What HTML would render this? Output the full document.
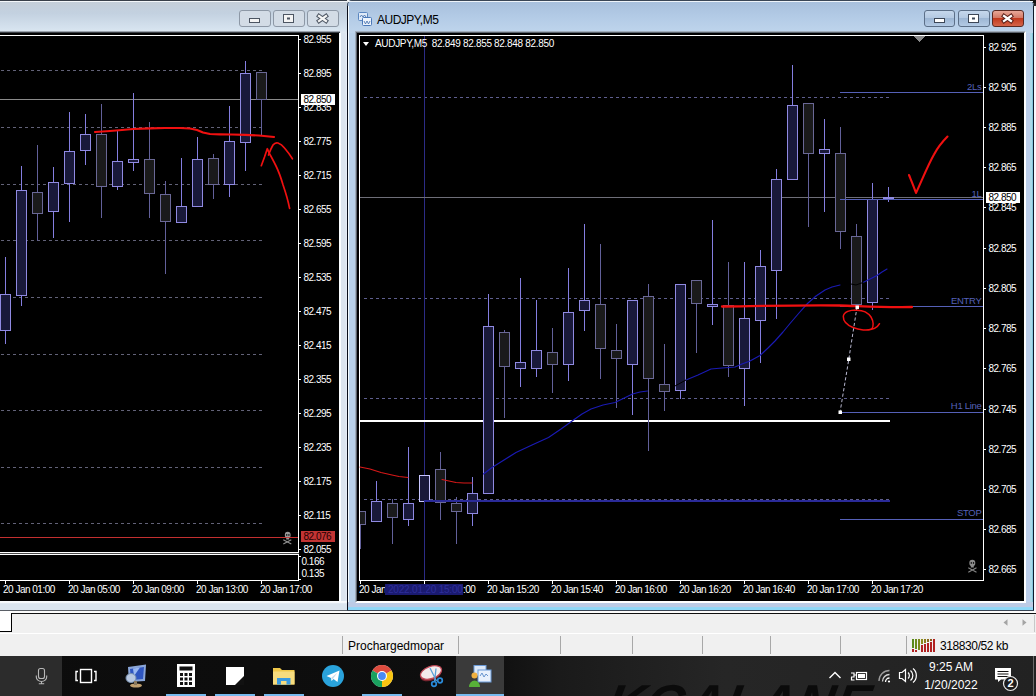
<!DOCTYPE html>
<html><head><meta charset="utf-8"><title>AUDJPY,M5</title>
<style>
html,body{margin:0;padding:0;background:#f0f0f0;}
body{width:1036px;height:696px;position:relative;overflow:hidden;font-family:"Liberation Sans",sans-serif;}
.abs{position:absolute;}
.pl{position:absolute;color:#fff;font-size:10px;line-height:13px;white-space:nowrap;letter-spacing:-0.5px;}
.bl{position:absolute;color:#5560b8;font-size:9.5px;line-height:13px;white-space:nowrap;text-align:right;letter-spacing:-0.3px;}
.btn{position:absolute;top:10px;height:17px;border-radius:3px;box-sizing:border-box;}
</style></head><body>
<!-- LEFT WINDOW -->
<div class="abs" style="left:0;top:0;width:347px;height:610px;background:#dce6f0;"></div>
<div class="abs" style="left:0;top:0;width:347px;height:33px;background:linear-gradient(#c5ced8 0,#c3d1e0 40%,#d6e3ef 88%,#e0e8f0 100%);"></div>
<div class="abs" style="left:0;top:31px;width:340px;height:1px;background:#9aa2ac;"></div><div class="abs" style="left:0;top:32px;width:340px;height:1px;background:#3a3e44;"></div>
<div class="abs" style="left:0;top:0;width:347px;height:1px;background:#39404a;"></div>
<div class="abs" style="left:0;top:1px;width:347px;height:1px;background:#f4f7fa;"></div>
<div class="btn" style="left:239px;width:32px;border:1px solid #8d98a6;background:#d3dce6;"></div>
<div class="btn" style="left:273px;width:32px;border:1px solid #8d98a6;background:#d3dce6;"></div>
<div class="btn" style="left:307px;width:32px;border:1px solid #8d98a6;background:#d3dce6;"></div>
<div class="abs" style="left:339px;top:33px;width:8px;height:577px;background:linear-gradient(90deg,#fafdff 0,#fafdff 25%,#dbe4ee 26%,#dbe4ee 75%,#e8eef8 100%);"></div>
<div class="abs" style="left:0;top:33px;width:339px;height:568px;background:#000;"></div>
<div class="abs" style="left:0;top:601px;width:347px;height:9px;background:linear-gradient(#fafcfe 0,#f4f8fb 20%,#dbe5ef 30%,#dbe5ef 100%);"></div><div class="abs" style="left:0;top:610px;width:347px;height:1px;background:#5a5f66;"></div>
<!-- RIGHT WINDOW -->
<div class="abs" style="left:347px;top:0;width:687px;height:611px;background:#b9d1ea;border-radius:5px 5px 0 0;"></div>
<div class="abs" style="left:347px;top:0;width:687px;height:33px;background:linear-gradient(#a7bfdc 0,#b3cbe6 50%,#bfd5ec 100%);border-radius:5px 5px 0 0;border:1px solid #3a4656;border-bottom:none;box-sizing:border-box;"></div>
<div class="abs" style="left:348px;top:1px;width:685px;height:1px;background:#eef4fa;"></div>
<div class="abs" style="left:347px;top:6px;width:1px;height:605px;background:#0a0e1a;"></div>
<div class="abs" style="left:1033px;top:6px;width:1px;height:605px;background:#0c1a2a;"></div><div class="abs" style="left:1034px;top:8px;width:2px;height:603px;background:#f6f6fc;"></div>
<div class="abs" style="left:348px;top:6px;width:1px;height:604px;background:#f4fbff;"></div>
<div class="abs" style="left:1026px;top:33px;width:7px;height:577px;background:linear-gradient(90deg,#bccfec 0,#bccfec 57%,#a8d8e8 58%,#a8d8e8 85%,#84c4dc 86%,#84c4dc 100%);"></div>
<div class="abs" style="left:347px;top:610px;width:687px;height:1px;background:#3a4656;"></div>
<div class="abs" style="left:348px;top:602px;width:685px;height:8px;background:linear-gradient(#bccbe6 0,#bccbe6 60%,#8ed8f8 70%,#8ed8f8 100%);"></div>
<div class="abs" style="left:355px;top:31px;width:671px;height:572px;box-sizing:border-box;border:1px solid #fff;border-left-color:#a0acba;border-top-color:#a0acba;"></div>
<div class="abs" style="left:356px;top:32px;width:669px;height:570px;box-sizing:border-box;border:1px solid #fff;border-left-color:#5a626c;border-top-color:#5a626c;"></div>
<div class="abs" style="left:357px;top:33px;width:667px;height:568px;background:#000;"></div>
<div class="abs" style="left:377px;top:13px;font-size:12px;line-height:15px;color:#000;letter-spacing:-0.5px;">AUDJPY,M5</div>
<div class="btn" style="left:924px;width:31px;border:1px solid #5c6f88;background:linear-gradient(#c5d7ec 0,#b4c9e2 45%,#9db6d4 50%,#b3cae4 100%);"></div>
<div class="btn" style="left:958px;width:32px;border:1px solid #5c6f88;background:linear-gradient(#c5d7ec 0,#b4c9e2 45%,#9db6d4 50%,#b3cae4 100%);"></div>
<div class="btn" style="left:992px;width:32px;border:1px solid #5a2a22;background:linear-gradient(#e8a898 0,#d47a66 45%,#c23a1e 50%,#d4654a 100%);"></div>
<div class="abs" style="left:1030px;top:0;width:6px;height:1px;background:#111;"></div><div class="abs" style="left:1033px;top:1px;width:3px;height:2px;background:#111;"></div><div class="abs" style="left:1034px;top:3px;width:2px;height:3px;background:#222;"></div>
<!-- MDI area below / status -->
<div class="abs" style="left:0;top:611px;width:1036px;height:2px;background:#fbfbfb;"></div><div class="abs" style="left:11px;top:613px;width:1025px;height:1px;background:#101010;"></div>
<div class="abs" style="left:0;top:614px;width:1036px;height:42px;background:#f0f0f0;"></div>
<div class="abs" style="left:0;top:611px;width:12px;height:21px;background:#fff;border-bottom:1px solid #000;box-sizing:border-box;"></div><div class="abs" style="left:11px;top:613px;width:1px;height:19px;background:#000;"></div>
<div class="abs" style="left:0;top:633px;width:1036px;height:1px;background:#fff;"></div>
<div class="abs" style="left:348px;top:639px;font-size:12px;line-height:14px;color:#000;letter-spacing:0px;">Prochargedmopar</div>
<div class="abs" style="left:940px;top:639px;font-size:12px;line-height:14px;color:#000;letter-spacing:-0.4px;">318830/52 kb</div>
<!-- TASKBAR -->
<div class="abs" style="left:0;top:656px;width:1036px;height:40px;background:linear-gradient(90deg,#0c0c0c 0,#0e0e0e 47%,#1a1a1a 54%,#262626 70%,#222 100%);"></div>
<div class="abs" style="left:612px;top:677px;height:19px;width:424px;overflow:hidden;"><div style="font-size:52px;line-height:52px;font-style:italic;font-weight:bold;color:#0b0b0b;letter-spacing:1px;white-space:nowrap;transform:skewX(-10deg);transform-origin:0 0;">KGALANE</div></div>
<div class="abs" style="left:0;top:656px;width:62px;height:40px;background:#2c2c2c;"></div>
<div class="abs" style="left:456px;top:656px;width:48px;height:40px;background:#3a3a3a;"></div>
<div class="abs" style="left:926px;top:660px;width:50px;font-size:12px;line-height:14px;color:#fff;text-align:center;">9:25 AM</div>
<div class="abs" style="left:916px;top:678px;width:70px;font-size:12px;line-height:14px;color:#fff;text-align:center;">1/20/2022</div>
<!--CHART-->
<svg width="1036" height="696" viewBox="0 0 1036 696" style="position:absolute;left:0;top:0" shape-rendering="crispEdges">
<line x1="1" y1="70.5" x2="262" y2="70.5" stroke="#626278" stroke-width="1" stroke-dasharray="3 3"/>
<line x1="1" y1="127.5" x2="262" y2="127.5" stroke="#626278" stroke-width="1" stroke-dasharray="3 3"/>
<line x1="1" y1="184.5" x2="262" y2="184.5" stroke="#626278" stroke-width="1" stroke-dasharray="3 3"/>
<line x1="1" y1="240.5" x2="262" y2="240.5" stroke="#626278" stroke-width="1" stroke-dasharray="3 3"/>
<line x1="1" y1="297.5" x2="262" y2="297.5" stroke="#626278" stroke-width="1" stroke-dasharray="3 3"/>
<line x1="1" y1="354.5" x2="262" y2="354.5" stroke="#626278" stroke-width="1" stroke-dasharray="3 3"/>
<line x1="1" y1="410.5" x2="262" y2="410.5" stroke="#626278" stroke-width="1" stroke-dasharray="3 3"/>
<line x1="1" y1="467.5" x2="262" y2="467.5" stroke="#626278" stroke-width="1" stroke-dasharray="3 3"/>
<line x1="1" y1="523.5" x2="262" y2="523.5" stroke="#626278" stroke-width="1" stroke-dasharray="3 3"/>
<rect x="0" y="99" width="298" height="1" fill="#8a8a8a"/>
<clipPath id="cl"><rect x="0" y="36" width="298" height="516"/></clipPath><g clip-path="url(#cl)">
<rect x="5" y="257" width="1" height="37" fill="#847ee0"/>
<rect x="5" y="331" width="1" height="13" fill="#847ee0"/>
<rect x="0.5" y="294.5" width="10" height="36" fill="#19193a" stroke="#908ae2" stroke-width="1"/>
<rect x="21" y="166" width="1" height="24" fill="#847ee0"/>
<rect x="21" y="296" width="1" height="10" fill="#847ee0"/>
<rect x="16.5" y="190.5" width="10" height="105" fill="#19193a" stroke="#908ae2" stroke-width="1"/>
<rect x="37" y="145" width="1" height="47" fill="#62609a"/>
<rect x="37" y="214" width="1" height="27" fill="#62609a"/>
<rect x="32.5" y="192.5" width="10" height="21" fill="#1a1a1b" stroke="#6a6896" stroke-width="1"/>
<rect x="53" y="167" width="1" height="15" fill="#847ee0"/>
<rect x="53" y="212" width="1" height="26" fill="#847ee0"/>
<rect x="48.5" y="182.5" width="10" height="29" fill="#19193a" stroke="#908ae2" stroke-width="1"/>
<rect x="69" y="112" width="1" height="39" fill="#847ee0"/>
<rect x="69" y="184" width="1" height="38" fill="#847ee0"/>
<rect x="64.5" y="151.5" width="10" height="32" fill="#19193a" stroke="#908ae2" stroke-width="1"/>
<rect x="85" y="114" width="1" height="20" fill="#847ee0"/>
<rect x="85" y="151" width="1" height="14" fill="#847ee0"/>
<rect x="80.5" y="134.5" width="10" height="16" fill="#19193a" stroke="#908ae2" stroke-width="1"/>
<rect x="101" y="104" width="1" height="30" fill="#62609a"/>
<rect x="101" y="187" width="1" height="31" fill="#62609a"/>
<rect x="96.5" y="134.5" width="10" height="52" fill="#1a1a1b" stroke="#6a6896" stroke-width="1"/>
<rect x="117" y="131" width="1" height="30" fill="#847ee0"/>
<rect x="117" y="187" width="1" height="3" fill="#847ee0"/>
<rect x="112.5" y="161.5" width="10" height="25" fill="#19193a" stroke="#908ae2" stroke-width="1"/>
<rect x="133" y="93" width="1" height="66" fill="#847ee0"/>
<rect x="133" y="163" width="1" height="8" fill="#847ee0"/>
<rect x="128.5" y="159.5" width="10" height="3" fill="#19193a" stroke="#908ae2" stroke-width="1"/>
<rect x="149" y="122" width="1" height="37" fill="#62609a"/>
<rect x="149" y="194" width="1" height="24" fill="#62609a"/>
<rect x="144.5" y="159.5" width="10" height="34" fill="#1a1a1b" stroke="#6a6896" stroke-width="1"/>
<rect x="165" y="181" width="1" height="13" fill="#62609a"/>
<rect x="165" y="222" width="1" height="52" fill="#62609a"/>
<rect x="160.5" y="194.5" width="10" height="27" fill="#1a1a1b" stroke="#6a6896" stroke-width="1"/>
<rect x="181" y="158" width="1" height="48" fill="#847ee0"/>
<rect x="176.5" y="206.5" width="10" height="16" fill="#19193a" stroke="#908ae2" stroke-width="1"/>
<rect x="197" y="137" width="1" height="22" fill="#847ee0"/>
<rect x="192.5" y="159.5" width="10" height="47" fill="#19193a" stroke="#908ae2" stroke-width="1"/>
<rect x="213" y="154" width="1" height="4" fill="#62609a"/>
<rect x="213" y="185" width="1" height="14" fill="#62609a"/>
<rect x="208.5" y="158.5" width="10" height="26" fill="#1a1a1b" stroke="#6a6896" stroke-width="1"/>
<rect x="229" y="106" width="1" height="35" fill="#847ee0"/>
<rect x="229" y="185" width="1" height="12" fill="#847ee0"/>
<rect x="224.5" y="141.5" width="10" height="43" fill="#19193a" stroke="#908ae2" stroke-width="1"/>
<rect x="245" y="61" width="1" height="12" fill="#847ee0"/>
<rect x="245" y="143" width="1" height="28" fill="#847ee0"/>
<rect x="240.5" y="73.5" width="10" height="69" fill="#19193a" stroke="#908ae2" stroke-width="1"/>
<rect x="261" y="100" width="1" height="35" fill="#62609a"/>
<rect x="256.5" y="72.5" width="10" height="27" fill="#1a1a1b" stroke="#6a6896" stroke-width="1"/>
</g>
<rect x="0" y="537" width="298" height="1" fill="#c43030"/>
<rect x="0" y="35" width="299" height="1" fill="#fff"/>
<rect x="298" y="35" width="1" height="546" fill="#fff"/>
<rect x="0" y="552" width="299" height="1" fill="#fff"/>
<rect x="0" y="553" width="299" height="1" fill="#4a4a4a"/>
<rect x="0" y="554" width="299" height="1" fill="#fff"/>
<rect x="0" y="580" width="299" height="1" fill="#fff"/>
<rect x="299" y="39" width="2" height="1" fill="#fff"/>
<rect x="299" y="73" width="2" height="1" fill="#fff"/>
<rect x="299" y="107" width="2" height="1" fill="#fff"/>
<rect x="299" y="141" width="2" height="1" fill="#fff"/>
<rect x="299" y="175" width="2" height="1" fill="#fff"/>
<rect x="299" y="209" width="2" height="1" fill="#fff"/>
<rect x="299" y="243" width="2" height="1" fill="#fff"/>
<rect x="299" y="277" width="2" height="1" fill="#fff"/>
<rect x="299" y="311" width="2" height="1" fill="#fff"/>
<rect x="299" y="345" width="2" height="1" fill="#fff"/>
<rect x="299" y="379" width="2" height="1" fill="#fff"/>
<rect x="299" y="413" width="2" height="1" fill="#fff"/>
<rect x="299" y="447" width="2" height="1" fill="#fff"/>
<rect x="299" y="481" width="2" height="1" fill="#fff"/>
<rect x="299" y="515" width="2" height="1" fill="#fff"/>
<rect x="299" y="549" width="2" height="1" fill="#fff"/>
<rect x="299" y="556" width="2" height="1" fill="#fff"/><rect x="299" y="579" width="2" height="1" fill="#fff"/>
<rect x="5" y="581" width="1" height="3" fill="#fff"/>
<rect x="69" y="581" width="1" height="3" fill="#fff"/>
<rect x="133" y="581" width="1" height="3" fill="#fff"/>
<rect x="197" y="581" width="1" height="3" fill="#fff"/>
<rect x="261" y="581" width="1" height="3" fill="#fff"/>
<line x1="364" y1="97.5" x2="890" y2="97.5" stroke="#5e5e8e" stroke-width="1" stroke-dasharray="3 3"/>
<line x1="364" y1="298.5" x2="890" y2="298.5" stroke="#5e5e8e" stroke-width="1" stroke-dasharray="3 3"/>
<line x1="364" y1="398.5" x2="890" y2="398.5" stroke="#5e5e8e" stroke-width="1" stroke-dasharray="3 3"/>
<line x1="364" y1="499.5" x2="890" y2="499.5" stroke="#5e5e8e" stroke-width="1" stroke-dasharray="3 3"/>
<rect x="424" y="36" width="1" height="545" fill="#2c2c86"/>
<rect x="360" y="197" width="623" height="1" fill="#6e6e78"/>
<rect x="360" y="420" width="530" height="2" fill="#fff"/>
<clipPath id="cr"><rect x="360" y="36" width="623" height="544"/></clipPath><g clip-path="url(#cr)">
<rect x="360" y="525" width="1" height="24" fill="#62609a"/>
<rect x="355.5" y="511.5" width="10" height="13" fill="#1a1a1b" stroke="#6a6896" stroke-width="1"/>
<rect x="376" y="481" width="1" height="20" fill="#847ee0"/>
<rect x="371.5" y="501.5" width="10" height="20" fill="#19193a" stroke="#908ae2" stroke-width="1"/>
<rect x="392" y="499" width="1" height="4" fill="#62609a"/>
<rect x="392" y="518" width="1" height="26" fill="#62609a"/>
<rect x="387.5" y="503.5" width="10" height="14" fill="#1a1a1b" stroke="#6a6896" stroke-width="1"/>
<rect x="408" y="447" width="1" height="56" fill="#847ee0"/>
<rect x="408" y="520" width="1" height="6" fill="#847ee0"/>
<rect x="403.5" y="503.5" width="10" height="16" fill="#19193a" stroke="#908ae2" stroke-width="1"/>
<rect x="419.5" y="475.5" width="10" height="26" fill="#19193a" stroke="#c8c6ff" stroke-width="1"/>
<rect x="440" y="452" width="1" height="17" fill="#62609a"/>
<rect x="440" y="503" width="1" height="17" fill="#62609a"/>
<rect x="435.5" y="469.5" width="10" height="33" fill="#1a1a1b" stroke="#6a6896" stroke-width="1"/>
<rect x="456" y="497" width="1" height="6" fill="#62609a"/>
<rect x="456" y="512" width="1" height="32" fill="#62609a"/>
<rect x="451.5" y="503.5" width="10" height="8" fill="#1a1a1b" stroke="#6a6896" stroke-width="1"/>
<rect x="472" y="477" width="1" height="16" fill="#847ee0"/>
<rect x="472" y="514" width="1" height="12" fill="#847ee0"/>
<rect x="467.5" y="493.5" width="10" height="20" fill="#19193a" stroke="#908ae2" stroke-width="1"/>
<rect x="488" y="294" width="1" height="32" fill="#847ee0"/>
<rect x="483.5" y="326.5" width="10" height="167" fill="#19193a" stroke="#908ae2" stroke-width="1"/>
<rect x="504" y="330" width="1" height="2" fill="#62609a"/>
<rect x="504" y="367" width="1" height="51" fill="#62609a"/>
<rect x="499.5" y="332.5" width="10" height="34" fill="#1a1a1b" stroke="#6a6896" stroke-width="1"/>
<rect x="520" y="278" width="1" height="84" fill="#847ee0"/>
<rect x="520" y="369" width="1" height="18" fill="#847ee0"/>
<rect x="515.5" y="362.5" width="10" height="6" fill="#19193a" stroke="#908ae2" stroke-width="1"/>
<rect x="536" y="300" width="1" height="50" fill="#847ee0"/>
<rect x="536" y="369" width="1" height="8" fill="#847ee0"/>
<rect x="531.5" y="350.5" width="10" height="18" fill="#19193a" stroke="#908ae2" stroke-width="1"/>
<rect x="552" y="328" width="1" height="24" fill="#62609a"/>
<rect x="552" y="365" width="1" height="28" fill="#62609a"/>
<rect x="547.5" y="352.5" width="10" height="12" fill="#1a1a1b" stroke="#6a6896" stroke-width="1"/>
<rect x="568" y="268" width="1" height="44" fill="#847ee0"/>
<rect x="568" y="365" width="1" height="16" fill="#847ee0"/>
<rect x="563.5" y="312.5" width="10" height="52" fill="#19193a" stroke="#908ae2" stroke-width="1"/>
<rect x="584" y="224" width="1" height="76" fill="#847ee0"/>
<rect x="584" y="311" width="1" height="20" fill="#847ee0"/>
<rect x="579.5" y="300.5" width="10" height="10" fill="#19193a" stroke="#908ae2" stroke-width="1"/>
<rect x="600" y="244" width="1" height="60" fill="#62609a"/>
<rect x="600" y="349" width="1" height="30" fill="#62609a"/>
<rect x="595.5" y="304.5" width="10" height="44" fill="#1a1a1b" stroke="#6a6896" stroke-width="1"/>
<rect x="616" y="324" width="1" height="26" fill="#62609a"/>
<rect x="616" y="359" width="1" height="49" fill="#62609a"/>
<rect x="611.5" y="350.5" width="10" height="8" fill="#1a1a1b" stroke="#6a6896" stroke-width="1"/>
<rect x="632" y="365" width="1" height="50" fill="#847ee0"/>
<rect x="627.5" y="300.5" width="10" height="64" fill="#19193a" stroke="#908ae2" stroke-width="1"/>
<rect x="648" y="284" width="1" height="12" fill="#62609a"/>
<rect x="648" y="379" width="1" height="72" fill="#62609a"/>
<rect x="643.5" y="296.5" width="10" height="82" fill="#1a1a1b" stroke="#6a6896" stroke-width="1"/>
<rect x="664" y="344" width="1" height="40" fill="#62609a"/>
<rect x="664" y="392" width="1" height="19" fill="#62609a"/>
<rect x="659.5" y="384.5" width="10" height="7" fill="#1a1a1b" stroke="#6a6896" stroke-width="1"/>
<rect x="680" y="391" width="1" height="8" fill="#847ee0"/>
<rect x="675.5" y="284.5" width="10" height="106" fill="#19193a" stroke="#908ae2" stroke-width="1"/>
<rect x="696" y="304" width="1" height="49" fill="#62609a"/>
<rect x="691.5" y="280.5" width="10" height="23" fill="#1a1a1b" stroke="#6a6896" stroke-width="1"/>
<rect x="712" y="220" width="1" height="84" fill="#847ee0"/>
<rect x="712" y="307" width="1" height="18" fill="#847ee0"/>
<rect x="707.5" y="304.5" width="10" height="2" fill="#19193a" stroke="#908ae2" stroke-width="1"/>
<rect x="728" y="262" width="1" height="43" fill="#62609a"/>
<rect x="728" y="366" width="1" height="11" fill="#62609a"/>
<rect x="723.5" y="305.5" width="10" height="60" fill="#1a1a1b" stroke="#6a6896" stroke-width="1"/>
<rect x="744" y="262" width="1" height="56" fill="#847ee0"/>
<rect x="744" y="369" width="1" height="37" fill="#847ee0"/>
<rect x="739.5" y="318.5" width="10" height="50" fill="#19193a" stroke="#908ae2" stroke-width="1"/>
<rect x="760" y="250" width="1" height="16" fill="#847ee0"/>
<rect x="760" y="321" width="1" height="42" fill="#847ee0"/>
<rect x="755.5" y="266.5" width="10" height="54" fill="#19193a" stroke="#908ae2" stroke-width="1"/>
<rect x="776" y="169" width="1" height="10" fill="#847ee0"/>
<rect x="776" y="271" width="1" height="48" fill="#847ee0"/>
<rect x="771.5" y="179.5" width="10" height="91" fill="#19193a" stroke="#908ae2" stroke-width="1"/>
<rect x="792" y="65" width="1" height="40" fill="#847ee0"/>
<rect x="787.5" y="105.5" width="10" height="74" fill="#19193a" stroke="#908ae2" stroke-width="1"/>
<rect x="808" y="154" width="1" height="73" fill="#62609a"/>
<rect x="803.5" y="103.5" width="10" height="50" fill="#1a1a1b" stroke="#6a6896" stroke-width="1"/>
<rect x="824" y="119" width="1" height="30" fill="#847ee0"/>
<rect x="824" y="154" width="1" height="58" fill="#847ee0"/>
<rect x="819.5" y="149.5" width="10" height="4" fill="#19193a" stroke="#908ae2" stroke-width="1"/>
<rect x="840" y="127" width="1" height="26" fill="#62609a"/>
<rect x="840" y="232" width="1" height="17" fill="#62609a"/>
<rect x="835.5" y="153.5" width="10" height="78" fill="#1a1a1b" stroke="#6a6896" stroke-width="1"/>
<rect x="856" y="224" width="1" height="12" fill="#62609a"/>
<rect x="851.5" y="236.5" width="10" height="68" fill="#1a1a1b" stroke="#6a6896" stroke-width="1"/>
<rect x="872" y="183" width="1" height="16" fill="#847ee0"/>
<rect x="872" y="303" width="1" height="7" fill="#847ee0"/>
<rect x="867.5" y="199.5" width="10" height="103" fill="#19193a" stroke="#908ae2" stroke-width="1"/>
<rect x="888" y="187" width="1" height="10" fill="#847ee0"/>
<rect x="888" y="199" width="1" height="3" fill="#847ee0"/>
<rect x="883.5" y="197.5" width="10" height="1" fill="#19193a" stroke="#908ae2" stroke-width="1"/>
</g>
<rect x="424" y="500" width="466" height="2" fill="#2a2a98"/>
<rect x="840" y="92" width="143" height="1" fill="#5560b8"/>
<rect x="840" y="199" width="143" height="1" fill="#5560b8"/>
<rect x="840" y="306" width="143" height="1" fill="#5560b8"/>
<rect x="840" y="412" width="143" height="1" fill="#5560b8"/>
<rect x="840" y="519" width="143" height="1" fill="#5560b8"/>
<rect x="359" y="35" width="625" height="1" fill="#fff"/>
<rect x="359" y="35" width="1" height="546" fill="#fff"/>
<rect x="983" y="35" width="1" height="546" fill="#fff"/>
<rect x="359" y="580" width="625" height="1" fill="#fff"/>
<rect x="984" y="47" width="2" height="1" fill="#fff"/>
<rect x="984" y="87" width="2" height="1" fill="#fff"/>
<rect x="984" y="127" width="2" height="1" fill="#fff"/>
<rect x="984" y="167" width="2" height="1" fill="#fff"/>
<rect x="984" y="207" width="2" height="1" fill="#fff"/>
<rect x="984" y="248" width="2" height="1" fill="#fff"/>
<rect x="984" y="288" width="2" height="1" fill="#fff"/>
<rect x="984" y="328" width="2" height="1" fill="#fff"/>
<rect x="984" y="368" width="2" height="1" fill="#fff"/>
<rect x="984" y="409" width="2" height="1" fill="#fff"/>
<rect x="984" y="449" width="2" height="1" fill="#fff"/>
<rect x="984" y="489" width="2" height="1" fill="#fff"/>
<rect x="984" y="529" width="2" height="1" fill="#fff"/>
<rect x="984" y="569" width="2" height="1" fill="#fff"/>
<rect x="360" y="581" width="1" height="3" fill="#fff"/>
<rect x="424" y="581" width="1" height="3" fill="#fff"/>
<rect x="488" y="581" width="1" height="3" fill="#fff"/>
<rect x="552" y="581" width="1" height="3" fill="#fff"/>
<rect x="616" y="581" width="1" height="3" fill="#fff"/>
<rect x="680" y="581" width="1" height="3" fill="#fff"/>
<rect x="744" y="581" width="1" height="3" fill="#fff"/>
<rect x="808" y="581" width="1" height="3" fill="#fff"/>
<rect x="872" y="581" width="1" height="3" fill="#fff"/>
<polygon points="914,36 925,36 919.5,42" fill="#8a8a8a"/>
</svg>
<svg width="1036" height="696" viewBox="0 0 1036 696" style="position:absolute;left:0;top:0" fill="none" stroke-linecap="round" stroke-linejoin="round">
<path d="M95 132 L110 131 L122 130 L133 129 L150 128.300 L165 128 L180 128 L190 128.500 L197 130 L203 132.500 L210 134 L220 134.300 L232 134.500 L245 134.800 L259 135.500 L274 137" stroke="#f01010" stroke-width="2.2"/>
<path d="M261.300 165.700 L264.500 157 L267.300 148.700 L269.500 153.800 C272 158 274 162 276 166 C279 172 281 178 283 184.700 C285.500 192 288 200 289.600 208.400" stroke="#f01010" stroke-width="1.700"/>
<path d="M268.500 155 C270 151 271.500 147.500 273 145 C274.500 143 276.500 142.600 278 143 C280.500 143.800 283 146 284.500 148 C287.500 151.500 290 155 292.400 158.800" stroke="#f01010" stroke-width="1.700"/>
<path d="M360 467 L370 469 L381 472.5 L392 475 L399 476.5 L408 477.5 M442 479.5 L449 481 L456 482.5 L464 483 L472 483" stroke="#d81818" stroke-width="1.05"/>
<path d="M483.5 474 L492 467.5 L504 460 L516 452.5 L532 445 L548.5 437.5 L561 429 L573.5 420 L582 414 L591 409 L603 405 L615 402.5 L632.5 394 L640 392 L647.5 391 M686 380 L698 375 L711 369 L722 368 L735 367 L742 364 L750 361 L760 355.5 L768 348 L775 341 L783 332 L790 323.5 L799 313 L807.5 303.5 L816 296 L825 290 L832 287 L840 285 M863 282.5 L870 279 L877 275.5 L882 272 L887 269" stroke="#1a1ab4" stroke-width="1.15"/>
<path d="M675 386 L686 380 M846 283 L856 285 L863 282.5" stroke="#000" stroke-width="1"/>
<path d="M722 306.5 C760 306 800 305 840 305.5 C860 306 880 307.5 912 307" stroke="#f01010" stroke-width="2.3"/>
<path d="M858 310 C850 309.500 843.500 312 843.300 316.500 C843.200 321 847 325 853 327.500 C859 330 868 331 871.500 329 C874 327 873.500 321 871 317 C868 312.500 862 310 856 310.200 M866 330 C871 330 877 328.500 879.500 323.700" stroke="#f01010" stroke-width="1.500"/>
<path d="M909 175 C911 180 914 187 916 193 C922 180 928 165 934 154.500 C938 147 943 141 947.500 136.500" stroke="#f01010" stroke-width="2.1"/>
<path d="M857 307 L848.75 359.5 L840 412.5" stroke="#b8b8d0" stroke-width="1" stroke-dasharray="2.5 3"/>
<rect x="855.5" y="305.5" width="3.5" height="3.5" fill="#fff" stroke="none"/>
<rect x="847.0" y="357.5" width="3.5" height="3.5" fill="#fff" stroke="none"/>
<rect x="838.5" y="410.5" width="3.5" height="3.5" fill="#fff" stroke="none"/>
</svg>
<div class="pl" style="left:303.5px;top:33px">82.955</div>
<div class="pl" style="left:303.5px;top:67px">82.895</div>
<div class="pl" style="left:303.5px;top:101px">82.835</div>
<div class="pl" style="left:303.5px;top:135px">82.775</div>
<div class="pl" style="left:303.5px;top:169px">82.715</div>
<div class="pl" style="left:303.5px;top:203px">82.655</div>
<div class="pl" style="left:303.5px;top:237px">82.595</div>
<div class="pl" style="left:303.5px;top:271px">82.535</div>
<div class="pl" style="left:303.5px;top:305px">82.475</div>
<div class="pl" style="left:303.5px;top:339px">82.415</div>
<div class="pl" style="left:303.5px;top:373px">82.355</div>
<div class="pl" style="left:303.5px;top:407px">82.295</div>
<div class="pl" style="left:303.5px;top:441px">82.235</div>
<div class="pl" style="left:303.5px;top:475px">82.175</div>
<div class="pl" style="left:303.5px;top:509px">82.115</div>
<div class="pl" style="left:303.5px;top:543px">82.055</div>
<div class="pl" style="left:301.5px;top:555px">0.166</div>
<div class="pl" style="left:301.5px;top:567px">0.135</div>
<div class="pl" style="left:988.5px;top:41px">82.925</div>
<div class="pl" style="left:988.5px;top:81px">82.905</div>
<div class="pl" style="left:988.5px;top:121px">82.885</div>
<div class="pl" style="left:988.5px;top:161px">82.865</div>
<div class="pl" style="left:988.5px;top:201px">82.845</div>
<div class="pl" style="left:988.5px;top:242px">82.825</div>
<div class="pl" style="left:988.5px;top:282px">82.805</div>
<div class="pl" style="left:988.5px;top:322px">82.785</div>
<div class="pl" style="left:988.5px;top:362px">82.765</div>
<div class="pl" style="left:988.5px;top:403px">82.745</div>
<div class="pl" style="left:988.5px;top:443px">82.725</div>
<div class="pl" style="left:988.5px;top:483px">82.705</div>
<div class="pl" style="left:988.5px;top:523px">82.685</div>
<div class="pl" style="left:988.5px;top:563px">82.665</div>
<div class="pl" style="left:3px;top:583px">20 Jan 01:00</div>
<div class="pl" style="left:68px;top:583px">20 Jan 05:00</div>
<div class="pl" style="left:132px;top:583px">20 Jan 09:00</div>
<div class="pl" style="left:196px;top:583px">20 Jan 13:00</div>
<div class="pl" style="left:260px;top:583px">20 Jan 17:00</div>
<div class="pl" style="left:359px;top:583px">20 Jan</div>
<div class="pl" style="left:487px;top:583px">20 Jan 15:20</div>
<div class="pl" style="left:551px;top:583px">20 Jan 15:40</div>
<div class="pl" style="left:615px;top:583px">20 Jan 16:00</div>
<div class="pl" style="left:679px;top:583px">20 Jan 16:20</div>
<div class="pl" style="left:743px;top:583px">20 Jan 16:40</div>
<div class="pl" style="left:807px;top:583px">20 Jan 17:00</div>
<div class="pl" style="left:871px;top:583px">20 Jan 17:20</div>
<div class="pl" style="left:463px;top:583px">:00</div>

<!-- chart header text -->
<div class="abs" style="left:363px;top:42px;width:0;height:0;border-left:3.5px solid transparent;border-right:3.5px solid transparent;border-top:4px solid #fff;"></div>
<div class="pl" style="left:375px;top:37px;letter-spacing:-0.32px;">AUDJPY,M5&nbsp; 82.849 82.855 82.848 82.850</div>
<!-- blue line labels -->
<div class="bl" style="left:930px;width:51.5px;top:80px;">2Ls</div>
<div class="bl" style="left:930px;width:51.5px;top:187px;">1L</div>
<div class="bl" style="left:930px;width:51.5px;top:294px;">ENTRY</div>
<div class="bl" style="left:930px;width:51.5px;top:399px;">H1 Line</div>
<div class="bl" style="left:930px;width:51.5px;top:506px;">STOP</div>
<!-- price boxes -->
<div class="abs" style="left:986px;top:192px;width:34px;height:11px;background:#fff;"></div>
<div class="pl" style="left:988.5px;top:191px;color:#000;">82.850</div>
<div class="abs" style="left:301px;top:94px;width:34px;height:11px;background:#fff;"></div>
<div class="pl" style="left:303.5px;top:93px;color:#000;">82.850</div>
<div class="abs" style="left:301px;top:531px;width:34px;height:11px;background:#c23434;"></div>
<div class="pl" style="left:303.5px;top:530px;color:#200;">82.076</div>
<!-- date highlight -->
<div class="abs" style="left:385px;top:584px;width:78px;height:11px;background:#1a1a70;"></div>
<div class="pl" style="left:388px;top:583px;color:#2e2e9a;letter-spacing:-0.2px;">2022.01.20 15:00</div>


<!-- window button glyphs + icons + taskbar -->
<svg width="1036" height="696" viewBox="0 0 1036 696" style="position:absolute;left:0;top:0">
<!-- left window buttons -->
<rect x="249.500" y="18.500" width="10" height="4" fill="#f4f4f4" stroke="#4c5562"/>
<rect x="283.500" y="14.500" width="10" height="8" fill="#f4f4f4" stroke="#4c5562"/>
<rect x="287" y="17.500" width="3" height="2" fill="#4c5562"/>
<path d="M319 16 L326 21 M326 16 L319 21" stroke="#4c5562" stroke-width="4.200" stroke-linecap="square"/>
<path d="M319 16 L326 21 M326 16 L319 21" stroke="#f4f4f4" stroke-width="2.200" stroke-linecap="square"/>
<!-- right window buttons -->
<rect x="934.500" y="18.500" width="10" height="4" fill="#fff" stroke="#3c4656"/>
<rect x="968.500" y="14.500" width="10" height="8" fill="#fff" stroke="#3c4656"/>
<rect x="972" y="17.500" width="3" height="2" fill="#3c4656"/>
<path d="M1004 16 L1011 21 M1011 16 L1004 21" stroke="#5a2018" stroke-width="4.200" stroke-linecap="square"/>
<path d="M1004 16 L1011 21 M1011 16 L1004 21" stroke="#fff" stroke-width="2.200" stroke-linecap="square"/>
<!-- title icon -->
<rect x="358.500" y="12.500" width="9" height="8" rx="1" fill="#dfeaf8" stroke="#5a86c0"/>
<rect x="362.500" y="17.500" width="9" height="8" rx="1" fill="#eef4fc" stroke="#4a78b8"/>
<path d="M360 17 l1.500 -2 l1.500 2 l1.500 -2 l1.500 2" stroke="#3a68a8" stroke-width="0.800" fill="none"/>
<path d="M364 21 l1.500 3 l1.500 -3 l1.500 3 l1.500 -3" stroke="#3a68a8" stroke-width="0.800" fill="none"/>
<!-- scroll arrows -->
<polygon points="1003.500,622.500 1007.500,619.300 1007.500,625.700" fill="#a4a4a4"/>
<polygon points="1026.500,622.500 1022.500,619.300 1022.500,625.700" fill="#a4a4a4"/>
<rect x="1034" y="615" width="1" height="17" fill="#c8c8c8"/>
<!-- status separators -->
<g fill="#a8a8a8">
<rect x="342" y="636" width="1" height="18"/><rect x="458" y="636" width="1" height="18"/><rect x="560" y="636" width="1" height="18"/>
<rect x="632" y="636" width="1" height="18"/><rect x="702" y="636" width="1" height="18"/><rect x="770" y="636" width="1" height="18"/>
<rect x="840" y="636" width="1" height="18"/><rect x="906" y="636" width="1" height="18"/>
</g>
<!-- signal bars -->
<g>
<rect x="912" y="639" width="2" height="9" fill="#5a8a1a"/><rect x="915" y="639" width="2" height="10" fill="#6a8a1a"/><rect x="918" y="639" width="2" height="11" fill="#7a8a1a"/>
<rect x="921" y="639" width="2" height="5" fill="#8a8a1a"/><rect x="921" y="645" width="2" height="7" fill="#b02020"/>
<rect x="924" y="639" width="2" height="4" fill="#8a7a1a"/><rect x="924" y="644" width="2" height="8" fill="#b02020"/>
<rect x="927" y="639" width="2" height="3" fill="#8a6a1a"/><rect x="927" y="643" width="2" height="9" fill="#b02020"/>
<rect x="930" y="639" width="2" height="2" fill="#8a5a1a"/><rect x="930" y="642" width="2" height="10" fill="#b02020"/>
<rect x="933" y="639" width="2" height="13" fill="#b02020"/>
<rect x="912" y="649" width="2" height="3" fill="#b02020"/><rect x="915" y="650" width="2" height="2" fill="#b02020"/>
</g>
<!-- skulls -->
<g id="sk1" fill="#989898">
<ellipse cx="287.700" cy="535" rx="2.900" ry="3.200"/><rect x="286.200" y="537.300" width="3" height="2.200"/>
<path d="M283.300 539.800 L291.300 544 M291.300 539.800 L283.300 544" stroke="#909090" stroke-width="1.100"/>
<rect x="286.100" y="534.200" width="1.200" height="1.500" fill="#000"/><rect x="288.300" y="534.200" width="1.200" height="1.500" fill="#000"/>
<rect x="282" y="537" width="12" height="1" fill="#c43030" opacity="0.850"/>
</g>
<g id="sk2" fill="#8c8c8c">
<ellipse cx="972.300" cy="563" rx="3" ry="3.300"/><rect x="970.800" y="565.300" width="3" height="2.200"/>
<path d="M968.300 567.800 L976.500 572.300 M976.500 567.800 L968.300 572.300" stroke="#868686" stroke-width="1.100"/>
<rect x="970.700" y="562.200" width="1.200" height="1.500" fill="#000"/><rect x="972.900" y="562.200" width="1.200" height="1.500" fill="#000"/>
</g>
<!-- TASKBAR ICONS -->
<!-- mic -->
<g stroke="#b8b8b8" fill="none" stroke-width="1.100">
<rect x="38.500" y="668.500" width="6" height="10" rx="2"/>
<path d="M36.300 675.500 v1.500 a5.200 4.500 0 0 0 10.400 0 v-1.500 M41.500 681.500 v2 M38.800 683.800 h5.400"/>
</g>
<!-- task view -->
<g stroke="#fff" fill="none" stroke-width="1.400">
<rect x="80.500" y="669.500" width="11" height="13"/>
<path d="M78 671.500 h-2 v9 h2 M94 671.500 h2 v9 h-2"/>
</g>
<!-- monitor -->
<g>
<path d="M128 667 L146 664.500 L145 681 L129 682 Z" fill="#8aa6d8"/>
<path d="M130 669 L144 667 L143 679 L131 680 Z" fill="#2f56c0"/>
<path d="M133 668.500 L140 667.500 L134 676 Z" fill="#9ab8f0"/>
<ellipse cx="131" cy="678" rx="5" ry="4.500" fill="#b8c8e0" stroke="#7890b0"/>
<ellipse cx="136" cy="685.500" rx="6" ry="2" fill="#c0a070"/>
<rect x="134" y="681" width="3" height="4" fill="#8a7a60"/>
</g>
<!-- calculator -->
<g>
<rect x="177" y="664" width="18" height="23" fill="#fff"/>
<rect x="179.500" y="666.500" width="13" height="4" fill="#111"/>
<g fill="#111">
<rect x="180" y="673" width="3" height="3"/><rect x="184.500" y="673" width="3" height="3"/><rect x="189" y="673" width="3" height="3"/>
<rect x="180" y="677.500" width="3" height="3"/><rect x="184.500" y="677.500" width="3" height="3"/><rect x="189" y="677.500" width="3" height="3"/>
<rect x="180" y="682" width="3" height="3"/><rect x="184.500" y="682" width="3" height="3"/><rect x="189" y="682" width="3" height="3"/>
</g>
</g>
<!-- white note -->
<rect x="226" y="667" width="18" height="18" fill="#fff"/>
<polygon points="244,676 244,685 235,685" fill="#111"/>
<!-- folder -->
<g>
<path d="M273 668 h7 l2 2 h12.500 v14.500 h-21.500 Z" fill="#f0c84a"/>
<path d="M273 671.500 h21.500 v13 h-21.500 Z" fill="#f7dc7e"/>
<path d="M277 678 h13.500 v6.500 h-13.500 Z" fill="#3a9ae0"/>
<rect x="281" y="681" width="5.500" height="3.500" fill="#f7dc7e"/>
</g>
<!-- underlines -->
<g fill="#76b9ed">
<rect x="166" y="694" width="40" height="2"/><rect x="215" y="694" width="40" height="2"/><rect x="264" y="694" width="40" height="2"/>
<rect x="362" y="694" width="40" height="2"/><rect x="456" y="694" width="48" height="2"/>
</g>
<!-- telegram -->
<circle cx="333" cy="676" r="11" fill="#2aa3dc"/>
<path d="M326.500 676 L339.500 670.500 L337.500 682 L333.500 679 L331.500 681 L331 678 Z" fill="#fff"/>
<path d="M331 678 L337.500 672.500 L332.500 679.500 Z" fill="#c8dcec"/>
<!-- chrome -->
<circle cx="382" cy="676" r="11" fill="#e8e8e8"/>
<path d="M382 676 L372.470 670.500 A11 11 0 0 1 391.530 670.500 Z" fill="#dd4b3e"/>
<path d="M382 676 L391.530 670.500 A11 11 0 0 1 382 687 Z" fill="#f9c513"/>
<path d="M382 676 L382 687 A11 11 0 0 1 372.470 670.500 Z" fill="#1aa15f"/>
<circle cx="382" cy="676" r="5" fill="#fff"/>
<circle cx="382" cy="676" r="3.900" fill="#4a8af4"/>
<!-- snipping tool -->
<g>
<ellipse cx="431" cy="674.500" rx="11" ry="6" fill="#7a2630" transform="rotate(-20 431 674.500)"/>
<ellipse cx="431" cy="672.500" rx="11" ry="6" fill="#f4ecec" stroke="#c04a58" stroke-width="1.200" transform="rotate(-20 431 672.500)"/>
<path d="M430 668 L436.500 681 M436 668.500 L434.500 682" stroke="#5aa0d8" stroke-width="1.300" fill="none"/>
<circle cx="434" cy="684" r="2.300" fill="none" stroke="#2a8ad8" stroke-width="1.700"/>
<circle cx="440" cy="680.500" r="2.300" fill="none" stroke="#2a8ad8" stroke-width="1.700"/>
</g>
<!-- mt4 -->
<g>
<rect x="474" y="665.500" width="12" height="10" fill="#dce8f8" stroke="#6a9ad8"/>
<rect x="478" y="670" width="13" height="12" fill="#e8f0fc" stroke="#6a9ad8"/>
<path d="M480 676 l2 -3 l2 4 l2 -3 l2 2" stroke="#5a8ac8" fill="none" stroke-width="0.900"/>
<circle cx="474.500" cy="675.500" r="3" fill="#f0b040"/>
<path d="M469 687 a5.500 6.500 0 0 1 11 0 Z" fill="#58b038"/>
</g>
<!-- tray -->
<path d="M829.500 678 L835 672.500 L840.500 678" stroke="#fff" stroke-width="1.400" fill="none"/>
<g stroke="#fff" fill="none" stroke-width="1.200">
<rect x="856.500" y="672.500" width="10" height="7"/>
<rect x="858" y="674" width="7" height="4" fill="#fff" stroke="none"/>
<path d="M851 673 h3 v4 h-3 M854 675 h2.500 M851.500 677 v3 h3"/>
</g>
<g stroke="#fff" fill="none" stroke-width="1.300">
<path d="M879 681 A10.500 10.500 0 0 1 889.500 670.500" opacity="0.550"/>
<path d="M882.500 681.500 A7 7 0 0 1 889.500 674.500" opacity="0.800"/>
<path d="M885.500 682 A4 4 0 0 1 889.500 678"/>
<circle cx="889" cy="681.500" r="1.100" fill="#fff" stroke="none"/>
</g>
<g stroke="#fff" fill="none" stroke-width="1.200">
<path d="M899.500 672.500 h2.500 l3.500 -3 v12 l-3.500 -3 h-2.500 Z"/>
<path d="M908 672.500 a4 4 0 0 1 0 6 M910.500 670.500 a6.500 6.500 0 0 1 0 10 M913 668.500 a9 9 0 0 1 0 14"/>
</g>
<path d="M995 668 h16 v11.500 h-10 l-3 2.500 v-2.500 h-3 Z" fill="#fff"/>
<g stroke="#111" stroke-width="1"><path d="M997.500 671.500 h11 M997.500 674 h11 M997.500 676.500 h11"/></g>
<circle cx="1010.500" cy="683.500" r="7" fill="#1c1c1c" stroke="#e8e8e8" stroke-width="1.200"/>
<rect x="1033" y="656" width="1" height="40" fill="#6a6a6a"/>
</svg>
<div class="abs" style="left:1005px;top:676px;width:11px;font-size:11px;line-height:14px;color:#fff;text-align:center;font-weight:bold;">2</div>

</body></html>
